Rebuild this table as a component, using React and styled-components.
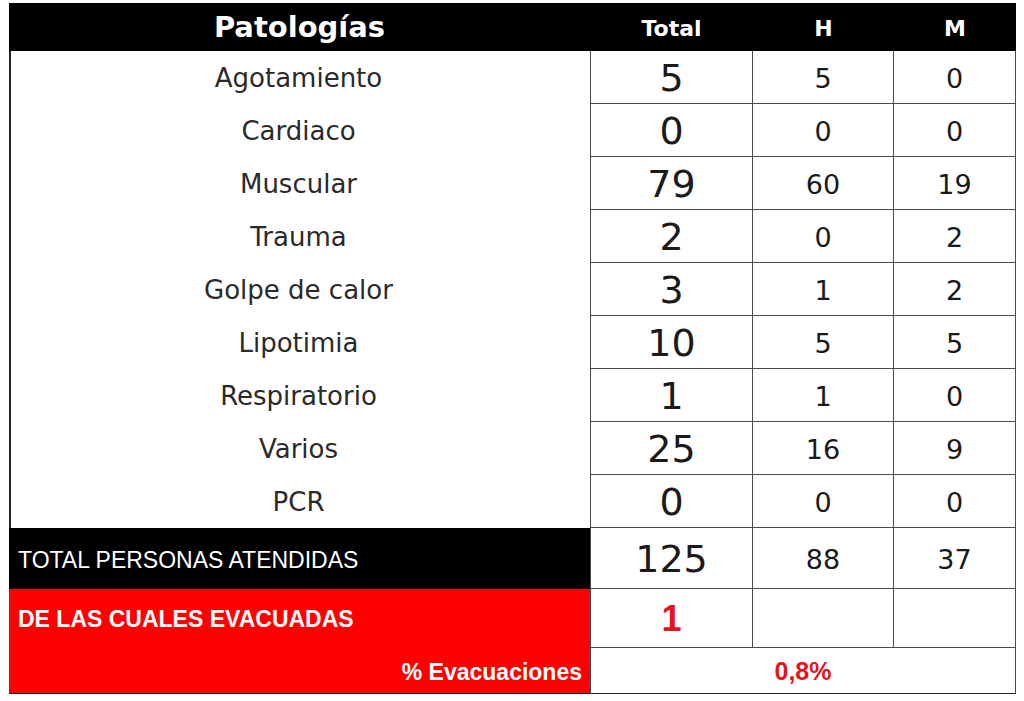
import React from 'react'
import styled, { createGlobalStyle } from 'styled-components';

const GlobalStyle = createGlobalStyle`
  html, body {
    margin: 0;
    padding: 0;
    background: #fff;
  }
`;

const LINE = '#4a4a4a';

const Table = styled.div`
  display: grid;
  grid-template-columns: 581px 163px 141px 122px;
  grid-template-rows: 48px repeat(9, 53px) 61px 59px 46px;
  margin: 3px 0 0 9px;
  width: 1007px;
  font-family: "DejaVu Sans", sans-serif;
`;

const HeadCell = styled.div`
  display: flex;
  align-items: center;
  justify-content: center;
  background: #000;
  color: #fff;
  font-weight: bold;
  font-size: ${({main}) => main ? '29px' : '22px'};
  padding-top: ${({main}) => main ? '0' : '2px'};
`;

const Label = styled.div`
  display: flex;
  align-items: center;
  justify-content: center;
  border-left: 2px solid #222;
  color: #2a2a2a;
  font-size: 26px;
  padding-right: 4px;
`;

const Num = styled.div`
  display: flex;
  align-items: center;
  justify-content: center;
  border-left: ${({first}) => first ? `1px solid ${LINE}` : 'none'};
  border-right: 1px solid ${LINE};
  border-bottom: 1px solid ${LINE};
  color: ${({red}) => red ? '#e3141b' : '#1a1a1a'};
  font-size: ${({big, red}) => red ? '36px' : big ? '38px' : '27px'};
  font-weight: ${({red}) => red ? 'bold' : 'normal'};
  font-family: ${({red}) => red ? '"Liberation Sans", sans-serif' : 'inherit'};
  padding-top: 2px;
`;

const TotalLabel = styled.div`
  display: flex;
  align-items: center;
  background: #000;
  color: #fff;
  font-family: "Liberation Sans", sans-serif;
  font-size: 23px;
  padding: 3px 0 0 9px;
`;

const RedLabel = styled.div`
  display: flex;
  align-items: center;
  justify-content: ${({right}) => right ? 'flex-end' : 'flex-start'};
  background: #ff0000;
  color: #fff;
  font-family: "Liberation Sans", sans-serif;
  font-weight: bold;
  font-size: 23px;
  padding: ${({right}) => right ? '3px 8px 0 0' : '2px 0 0 9px'};
  border-bottom: ${({right}) => right ? '1px solid #222' : 'none'};
`;

const Percent = styled.div`
  grid-column: span 3;
  display: flex;
  align-items: center;
  justify-content: center;
  border-left: 1px solid ${LINE};
  border-right: 1px solid ${LINE};
  border-bottom: 1px solid #222;
  color: #e3141b;
  font-family: "Liberation Sans", sans-serif;
  font-weight: bold;
  font-size: 25px;
  padding-top: 2px;
`;

const rows = [
  ['Agotamiento', 5, 5, 0],
  ['Cardiaco', 0, 0, 0],
  ['Muscular', 79, 60, 19],
  ['Trauma', 2, 0, 2],
  ['Golpe de calor', 3, 1, 2],
  ['Lipotimia', 10, 5, 5],
  ['Respiratorio', 1, 1, 0],
  ['Varios', 25, 16, 9],
  ['PCR', 0, 0, 0],
];

export default function App() {
  return (
    <>
      <GlobalStyle />
      <Table>
        <HeadCell main>Patologías</HeadCell>
        <HeadCell>Total</HeadCell>
        <HeadCell>H</HeadCell>
        <HeadCell>M</HeadCell>

        {rows.map(([name, total, h, m]) => (
          <React.Fragment key={name}>
            <Label>{name}</Label>
            <Num first big>{total}</Num>
            <Num>{h}</Num>
            <Num>{m}</Num>
          </React.Fragment>
        ))}

        <TotalLabel>TOTAL PERSONAS ATENDIDAS</TotalLabel>
        <Num first big>125</Num>
        <Num>88</Num>
        <Num>37</Num>

        <RedLabel>DE LAS CUALES EVACUADAS</RedLabel>
        <Num first big red>1</Num>
        <Num />
        <Num />

        <RedLabel right>% Evacuaciones</RedLabel>
        <Percent>0,8%</Percent>
      </Table>
    </>
  )
}
